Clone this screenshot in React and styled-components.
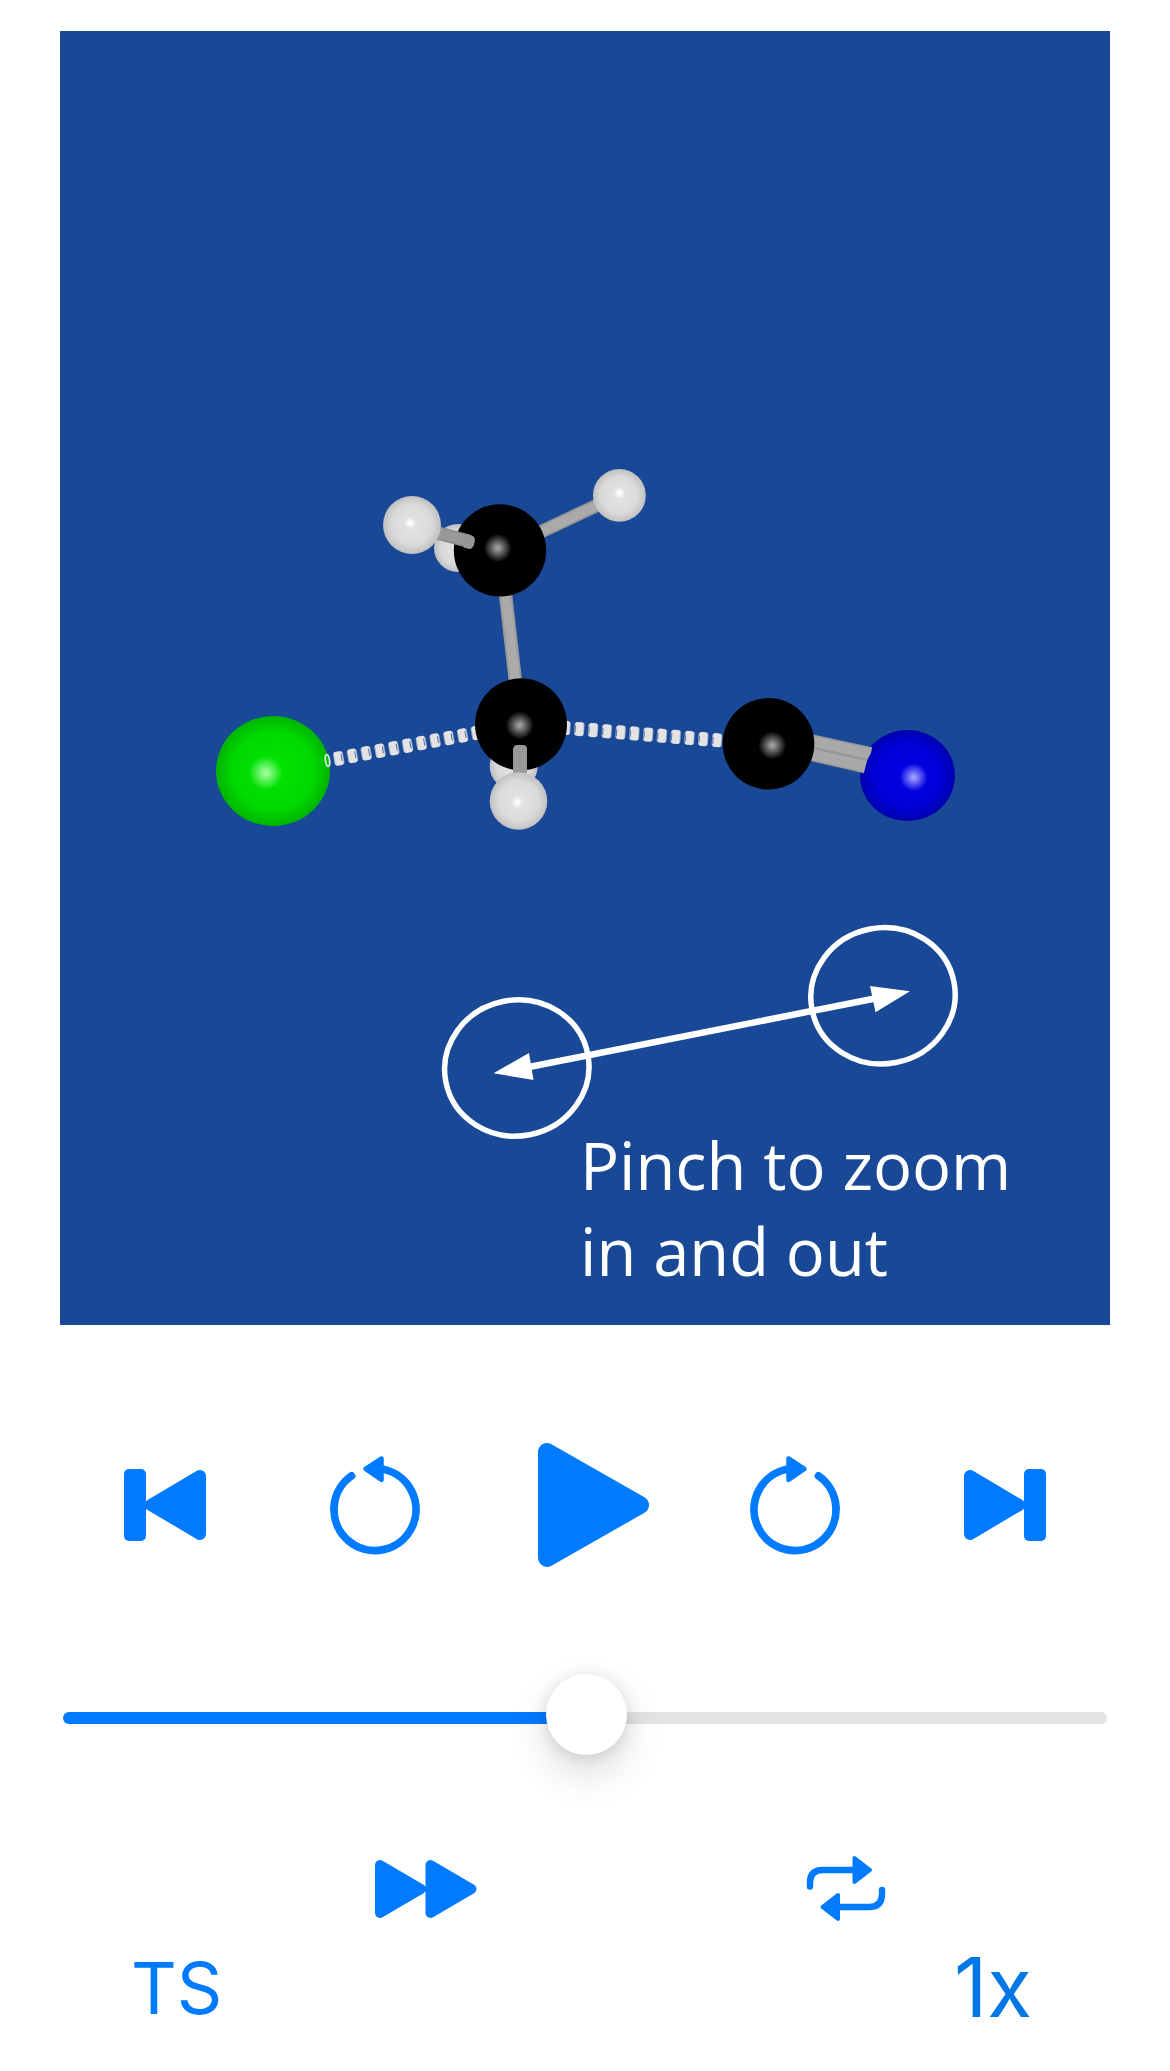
import React, { useState } from "react";
import styled, { createGlobalStyle } from "styled-components";

const GlobalStyle = createGlobalStyle`
  *, *::before, *::after { box-sizing: border-box; }
  body {
    margin: 0;
    background: #ffffff;
    font-family: Inter, "Liberation Sans", sans-serif;
  }
`;

const Page = styled.main`
  padding: 31px 60px 40px;
`;

const Viewer = styled.figure`
  display: grid;
  margin: 0;
  background: #184896;
`;

const Scene = styled.svg`
  grid-area: 1 / 1;
  display: block;
  width: 100%;
  height: auto;
`;

const Hint = styled.figcaption`
  grid-area: 1 / 1;
  align-self: end;
  margin: 0 0 31px 520px;
  color: #ffffff;
  font-family: "Open Sans", "Noto Sans", sans-serif;
  font-size: 65px;
  line-height: 86px;
`;

const Transport = styled.div`
  display: grid;
  grid-template-columns: repeat(5, 1fr);
  align-items: center;
  justify-items: center;
  margin-top: 118px;
`;

const Modes = styled.div`
  display: grid;
  grid-template-columns: repeat(2, 1fr);
  justify-items: center;
  margin-top: 87px;
  padding: 0 54px 0 156px;
`;

const Labels = styled.div`
  display: flex;
  align-items: center;
  justify-content: space-between;
  margin-top: 19px;
  padding: 0 78px 0 71px;
`;

const IconButton = styled.button`
  display: flex;
  padding: 0;
  border: 0;
  background: none;
  color: #007aff;
  cursor: pointer;
`;

const Glyph = styled.svg`
  display: block;
  overflow: visible;
  fill: currentColor;
  stroke: currentColor;
  stroke-linejoin: round;
  stroke-linecap: round;
`;

const TextButton = styled.button`
  padding: 0;
  border: 0;
  background: none;
  color: ${(p) => p.$color};
  font-family: inherit;
  font-size: ${(p) => p.$size}px;
  line-height: 80px;
  cursor: pointer;
`;

const Slider = styled.input`
  appearance: none;
  display: block;
  width: calc(100% - 6px);
  height: 88px;
  margin: 107px 3px 0;
  background: none;
  cursor: pointer;

  &::-webkit-slider-runnable-track {
    height: 12px;
    border-radius: 6px;
    background: linear-gradient(to right, #007aff var(--progress), #e3e3e5 var(--progress));
  }

  &::-webkit-slider-thumb {
    appearance: none;
    width: 81px;
    height: 81px;
    margin-top: -38px;
    border-radius: 50%;
    background: #ffffff;
    box-shadow: 0 18px 40px rgba(0, 0, 0, 0.14), 0 2px 16px rgba(0, 0, 0, 0.12);
  }
`;

const finishes = {
  hydrogen: [["0", "#e4e4e4"], ["0.7", "#dadada"], ["1", "#c0c0c0"]],
  carbon: [["0", "#000000"], ["1", "#000000"]],
  chlorine: [["0", "#00e400"], ["0.7", "#00da00"], ["1", "#00b400"]],
  nitrogen: [["0", "#0000e4"], ["0.7", "#0000d8"], ["1", "#0000ae"]],
};

const shines = {
  hydrogen: { color: "#ffffff", r: 6 },
  carbon: { color: "#9c9c9c", r: 14 },
  chlorine: { color: "#98ff98", r: 17 },
  nitrogen: { color: "#9a9aff", r: 14 },
};

function Atom({ kind, x, y, rx, ry = rx, shine }) {
  return (
    <g>
      <ellipse cx={x} cy={y} rx={rx} ry={ry} fill={`url(#${kind})`} />
      {shine && <circle cx={shine[0]} cy={shine[1]} r={shines[kind].r} fill={`url(#${kind}-shine)`} />}
    </g>
  );
}

function Bond({ from, to, tone = "#aaaaaa", edge = "#969696", cap = "butt" }) {
  const ends = { x1: from[0], y1: from[1], x2: to[0], y2: to[1], strokeLinecap: cap };
  return (
    <g>
      <line {...ends} stroke={edge} strokeWidth="13.5" />
      <line {...ends} stroke={tone} strokeWidth="10" />
    </g>
  );
}

function PartialBond({ x, y, dy, angle, count }) {
  return Array.from({ length: count }, (_, i) => (
    <g key={i} transform={`translate(${x + i * 13.77} ${y + i * dy}) rotate(${angle})`}>
      <rect x="-5" y="-6.5" width="10" height="13" rx="2" fill="#a9b3ca" />
      <rect x="-4" y="-7" width="8" height="14" rx="2" fill="#e3e3e3" />
      <path d={angle < 0 ? "M3-4v7" : "M-4-3v7"} stroke="#5670a8" strokeWidth="1" />
    </g>
  ));
}

function Molecule() {
  return (
    <Scene viewBox="60 31 1050 1294" role="img" aria-label="Transition state molecule">
      <defs>
        {Object.entries(finishes).map(([kind, stops]) => (
          <radialGradient key={kind} id={kind}>
            {stops.map(([offset, color]) => (
              <stop key={offset} offset={offset} stopColor={color} />
            ))}
          </radialGradient>
        ))}
        {Object.entries(shines).map(([kind, { color }]) => (
          <radialGradient key={kind} id={`${kind}-shine`}>
            <stop offset="0.1" stopColor={color} />
            <stop offset="0.5" stopColor={color} stopOpacity="0.55" />
            <stop offset="1" stopColor={color} stopOpacity="0" />
          </radialGradient>
        ))}
      </defs>

      <Atom kind="hydrogen" x={458} y={548} rx={24} />
      <Bond from={[505, 590]} to={[516, 686]} />
      <Bond from={[530, 537]} to={[602, 503]} />
      <Atom kind="carbon" x={500} y={550.4} rx={46.2} shine={[497.7, 548]} />
      <Bond from={[430, 531]} to={[468, 541]} tone="#999999" edge="#8c8c8c" />
      <path d="M466 534l6 1.500q4 2 2.500 7q-1 6-5 6.500l-6-1.500z" fill="#969696" />
      <Atom kind="hydrogen" x={412} y={525} rx={29} shine={[410, 523]} />
      <Atom kind="hydrogen" x={619.4} y={495.4} rx={26.4} shine={[619.7, 493]} />

      <Atom kind="hydrogen" x={513.7} y={766} rx={24} />
      <Atom kind="chlorine" x={273} y={771} rx={57} ry={55} shine={[265.7, 773]} />
      <ellipse cx="327.500" cy="760.500" rx="2" ry="6" fill="none" stroke="#d4ecd4" strokeWidth="1.800" transform="rotate(-8 327.500 760.500)" />
      <PartialBond x={338.7} y={758.4} dy={-2.55} angle={-10} count={11} />
      <PartialBond x={565.5} y={727.9} dy={1.12} angle={4} count={12} />
      <Atom kind="carbon" x={521} y={724.3} rx={46} shine={[519.7, 725.3]} />
      <path d="M513 773v-24q1-4 4-4h6q4 0 4 4v24z" fill="#999999" />
      <Atom kind="hydrogen" x={518.5} y={801} rx={28.8} shine={[517.3, 802.3]} />

      <Atom kind="nitrogen" x={907.5} y={775.5} rx={47.5} ry={45.5} shine={[913.7, 777.3]} />
      <path d="M805 733.500L872 748L871 753L867.300 760L864 772.500L805 759z" fill="#a9a9a9" />
      <path d="M805 733.500L872 748M805 759L864 772.500" stroke="#999999" strokeWidth="1.500" />
      <path d="M805 746L867 760" stroke="#979797" strokeWidth="2.500" />
      <Atom kind="carbon" x={768.5} y={743.8} rx={45.8} shine={[772.3, 745.3]} />

      <g fill="none" stroke="#ffffff" strokeWidth="5.500">
        <ellipse cx="516.800" cy="1068" rx="72.300" ry="68" transform="rotate(-11 516.800 1068)" />
        <ellipse cx="883" cy="995.800" rx="72.300" ry="68" transform="rotate(-11 883 995.800)" />
        <path d="M529 1067L875 998.500" strokeWidth="6.500" />
      </g>
      <g fill="#ffffff">
        <path d="M493.500 1073.300L529 1053L533.500 1080z" />
        <path d="M910 991.300L870 986L875.500 1012.300z" />
      </g>
    </Scene>
  );
}

function SkipIcon({ back }) {
  return (
    <Glyph width="82" height="72" viewBox="0 0 82 72">
      <g transform={back ? undefined : "translate(82 0) scale(-1 1)"}>
        <rect width="22" height="72" rx="5" stroke="none" />
        <path d="M27 36L76 7v58z" strokeWidth="12" />
      </g>
    </Glyph>
  );
}

function StepIcon({ back }) {
  return (
    <Glyph width="90" height="98" viewBox="0 0 90 98">
      <g transform={back ? undefined : "translate(90 0) scale(-1 1)"}>
        <path d="M21.500 19.900A41 41 0 1 0 53 13.300" fill="none" strokeWidth="7.800" />
        <path d="M35.500 13L51.500 2.500v21.500z" strokeWidth="4.500" />
      </g>
    </Glyph>
  );
}

function PlayIcon() {
  return (
    <Glyph width="128" height="124" viewBox="0 0 128 124">
      <path d="M26 9v106L119 62z" strokeWidth="18" />
    </Glyph>
  );
}

function FastIcon() {
  return (
    <Glyph width="102" height="80" viewBox="0 0 102 80">
      <path d="M5 16v48L46 40zM55.500 16v48L96.500 40z" strokeWidth="10" />
    </Glyph>
  );
}

function RepeatIcon() {
  return (
    <Glyph width="78" height="80" viewBox="0 0 78 80">
      <path d="M3 37.500v-4Q3 21 16 21H46M75 41v4Q75 58 62 58H32" fill="none" strokeWidth="6.400" />
      <path d="M47.500 9v24L63 21zM31 46v24L15.500 58z" strokeWidth="4" />
    </Glyph>
  );
}

export default function App() {
  const [position, setPosition] = useState(502);

  return (
    <>
      <GlobalStyle />
      <Page>
        <Viewer>
          <Molecule />
          <Hint>
            Pinch to zoom
            <br />
            in and out
          </Hint>
        </Viewer>

        <Transport>
          <IconButton type="button" aria-label="Skip to start">
            <SkipIcon back />
          </IconButton>
          <IconButton type="button" aria-label="Step back">
            <StepIcon back />
          </IconButton>
          <IconButton type="button" aria-label="Play">
            <PlayIcon />
          </IconButton>
          <IconButton type="button" aria-label="Step forward">
            <StepIcon />
          </IconButton>
          <IconButton type="button" aria-label="Skip to end">
            <SkipIcon />
          </IconButton>
        </Transport>

        <Slider
          type="range"
          aria-label="Animation position"
          min="0"
          max="1000"
          value={position}
          onChange={(e) => setPosition(Number(e.target.value))}
          style={{ "--progress": `${position / 10}%` }}
        />

        <Modes>
          <IconButton type="button" aria-label="Fast forward">
            <FastIcon />
          </IconButton>
          <IconButton type="button" aria-label="Repeat">
            <RepeatIcon />
          </IconButton>
        </Modes>

        <Labels>
          <TextButton type="button" $size={71} $color="#007aff">
            TS
          </TextButton>
          <TextButton type="button" $size={82} $color="#0077e6">
            1x
          </TextButton>
        </Labels>
      </Page>
    </>
  );
}
